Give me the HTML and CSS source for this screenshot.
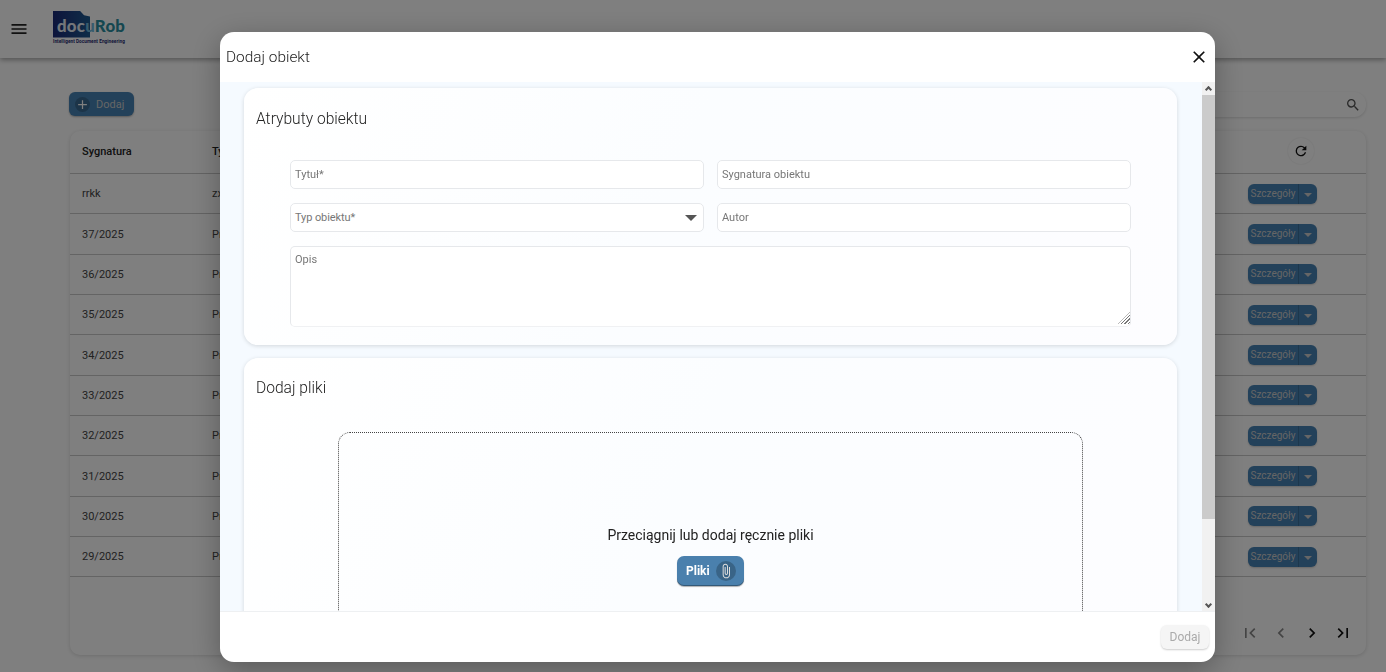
FILE: index.html
```html
<!DOCTYPE html>
<html lang="pl">
<head>
<meta charset="utf-8">
<title>docuRob</title>
<link rel="stylesheet" href="styles.css">
</head>
<body>
<div class="app">
  <header class="topbar">
    <svg class="menu-icon" viewBox="0 0 24 24"><path d="M3 18h18v-2H3v2zm0-5h18v-2H3v2zm0-7v2h18V6H3z"/></svg>
    <div class="logo">
      <div class="logo-mark">
        <span class="logo-shape"></span>
        <span class="logo-text"><span class="logo-docu">doc</span><span class="logo-u">u</span><span class="logo-rob">Rob</span></span>
      </div>
      <div class="logo-tag">Intelligent Document Engineering</div>
    </div>
  </header>
  <main class="main">
    <div class="toolbar">
      <button class="add-btn"><span class="add-icon"><svg viewBox="0 0 24 24"><path d="M19 13h-6v6h-2v-6H5v-2h6V5h2v6h6v2z"/></svg></span>Dodaj</button>
      <div class="search"><svg viewBox="0 0 24 24"><path d="M15.5 14h-.79l-.28-.27A6.47 6.47 0 0 0 16 9.500 6.500 6.500 0 1 0 9.500 16c1.610 0 3.090-.59 4.230-1.570l.27.28v.79l5 4.990L20.490 19l-4.990-5zm-6 0C7.010 14 5 11.990 5 9.500S7.010 5 9.500 5 14 7.010 14 9.500 11.990 14 9.500 14z"/></svg></div>
    </div>
    <section class="table-card">
      <div class="row head">
        <span class="c1">Sygnatura</span><span class="c2">Typ</span>
        <span class="refresh"><svg viewBox="0 0 24 24"><path d="M17.65 6.35A7.96 7.96 0 0 0 12 4a8 8 0 1 0 7.73 10h-2.08A6 6 0 1 1 12 6c1.66 0 3.14.69 4.22 1.78L13 11h7V4l-2.35 2.35z"/></svg></span>
      </div>
      <div class="row"><span class="c1">rrkk</span><span class="c2">zxc</span><span class="split"><b>Szczegóły</b><i></i></span></div>
      <div class="row"><span class="c1">37/2025</span><span class="c2">Projekt</span><span class="split"><b>Szczegóły</b><i></i></span></div>
      <div class="row"><span class="c1">36/2025</span><span class="c2">Projekt</span><span class="split"><b>Szczegóły</b><i></i></span></div>
      <div class="row"><span class="c1">35/2025</span><span class="c2">Projekt</span><span class="split"><b>Szczegóły</b><i></i></span></div>
      <div class="row"><span class="c1">34/2025</span><span class="c2">Projekt</span><span class="split"><b>Szczegóły</b><i></i></span></div>
      <div class="row"><span class="c1">33/2025</span><span class="c2">Projekt</span><span class="split"><b>Szczegóły</b><i></i></span></div>
      <div class="row"><span class="c1">32/2025</span><span class="c2">Projekt</span><span class="split"><b>Szczegóły</b><i></i></span></div>
      <div class="row"><span class="c1">31/2025</span><span class="c2">Projekt</span><span class="split"><b>Szczegóły</b><i></i></span></div>
      <div class="row"><span class="c1">30/2025</span><span class="c2">Projekt</span><span class="split"><b>Szczegóły</b><i></i></span></div>
      <div class="row"><span class="c1">29/2025</span><span class="c2">Projekt</span><span class="split"><b>Szczegóły</b><i></i></span></div>
      <div class="pager">
        <svg class="off" viewBox="0 0 24 24"><path d="M18.41 16.59 13.82 12l4.59-4.59L17 6l-6 6 6 6zM6 6h2v12H6z"/></svg>
        <svg class="off" viewBox="0 0 24 24"><path d="M15.41 7.41 14 6l-6 6 6 6 1.41-1.41L10.83 12z"/></svg>
        <svg viewBox="0 0 24 24"><path d="M10 6 8.59 7.41 13.17 12l-4.58 4.59L10 18l6-6z"/></svg>
        <svg viewBox="0 0 24 24"><path d="M5.59 7.41 10.18 12l-4.59 4.59L7 18l6-6-6-6zM16 6h2v12h-2z"/></svg>
      </div>
    </section>
  </main>
</div>

<div class="overlay">
  <div class="modal">
    <div class="modal-head">
      <h1>Dodaj obiekt</h1>
      <svg class="close" viewBox="0 0 24 24"><path d="M19 6.41 17.59 5 12 10.59 6.41 5 5 6.41 10.59 12 5 17.59 6.41 19 12 13.41 17.59 19 19 17.59 13.41 12z"/></svg>
    </div>
    <div class="modal-body">
      <div class="scroller">
        <section class="card attrs">
          <h2>Atrybuty obiektu</h2>
          <form class="form">
            <input class="field" placeholder="Tytuł*">
            <input class="field" placeholder="Sygnatura obiektu">
            <div class="field select"><span>Typ obiektu*</span><i class="caret"></i></div>
            <input class="field" placeholder="Autor">
            <div class="area-wrap"><textarea class="field area" placeholder="Opis"></textarea></div>
          </form>
        </section>
        <section class="card files">
          <h2>Dodaj pliki</h2>
          <div class="drop">
            <p>Przeciągnij lub dodaj ręcznie pliki</p>
            <button class="files-btn">Pliki<span class="clip"><svg viewBox="0 0 24 24"><path d="M16.5 6v11.500c0 2.210-1.790 4-4 4s-4-1.790-4-4V5a2.500 2.500 0 0 1 5 0v10.500c0 .55-.45 1-1 1s-1-.45-1-1V6H10v9.500a2.500 2.500 0 0 0 5 0V5c0-2.210-1.790-4-4-4S7 2.790 7 5v12.500c0 3.040 2.460 5.500 5.500 5.500s5.500-2.460 5.500-5.500V6h-1.500z"/></svg></span></button>
          </div>
        </section>
      </div>
      <div class="scrollbar">
        <span class="sb-btn"><i class="up"></i></span>
        <span class="sb-track"><span class="sb-thumb"></span></span>
        <span class="sb-btn"><i class="down"></i></span>
      </div>
    </div>
    <div class="modal-foot"><button class="submit" disabled>Dodaj</button></div>
  </div>
</div>
</body>
</html>
```
FILE: styles.css
```css
* { box-sizing: border-box; }
html, body { margin: 0; height: 100%; overflow: hidden; }
body { font-family: Roboto, "Liberation Sans", sans-serif; color: #222; background: #fff; }
.app { height: 672px; display: flex; flex-direction: column; }

.topbar { height: 58px; flex: none; background: #fff; box-shadow: 0 2px 5px rgba(0,0,0,.35); display: flex; align-items: center; padding-left: 9px; gap: 24px; position: relative; }
.menu-icon { width: 20px; height: 20px; fill: #222; }
.logo { display: flex; flex-direction: column; width: 74px; margin-top: -3px; }
.logo-mark { position: relative; height: 27px; }
.logo-shape { position: absolute; left: 0; top: 0; width: 37px; height: 27px; background: linear-gradient(90deg, #1b2a78, #1d5a90); clip-path: polygon(0 0, 72% 0, 84% 18%, 100% 22%, 100% 100%, 0 100%); }
.logo-text { position: relative; display: block; font: 900 16.8px/29px Lato, Roboto, sans-serif; padding-left: 4px; letter-spacing: .25px; white-space: nowrap; }
.logo-docu { color: #e8eef5; }
.logo-u { color: #6fb8dc; }
.logo-rob { color: #2a8ea0; }
.logo-tag { font: 700 4.7px/6px Roboto, sans-serif; color: #1d2a70; white-space: nowrap; margin-top: 1px; letter-spacing: .05px; }

.main { flex: 1; display: flex; flex-direction: column; padding: 34px 20px 17px 70px; background: #fff; min-height: 0; }
.toolbar { display: flex; justify-content: space-between; height: 25px; margin-bottom: 14px; margin-left: -1px; }
.add-btn { width: 65px; height: 24px; border: 0; border-radius: 6px; background: #4682b4; color: #ccc; font: 400 11px Roboto, sans-serif; display: flex; align-items: center; gap: 6px; padding: 0 0 0 6px; box-shadow: 0 1px 2px rgba(0,0,0,.3); }
.add-icon { width: 15px; height: 15px; border-radius: 50%; background: rgba(0,0,0,.2); display: flex; }
.add-icon svg { width: 15px; height: 15px; fill: #fff; }
.search { width: 400px; height: 25px; border-radius: 12px; background: #fff; box-shadow: 0 1px 3px rgba(0,0,0,.15); display: flex; align-items: center; justify-content: flex-end; padding-right: 5px; }
.search svg { width: 16px; height: 16px; fill: #555; }

.table-card { flex: 1; background: #fff; border-radius: 10px; box-shadow: 0 1px 4px rgba(0,0,0,.15); display: flex; flex-direction: column; min-height: 0; }
.row { height: 40.35px; flex: none; display: flex; align-items: center; font-size: 11px; color: #444; border-bottom: 1px solid #c8c8c8; padding-left: 12px; }
.head { height: 43px; font-weight: 500; color: #222; padding-bottom: 2px; }
.c1 { width: 130px; }
.c2 { flex: 1; }
.refresh { width: 26px; height: 26px; border-radius: 50%; margin-right: 52px; display: flex; align-items: center; justify-content: center; box-shadow: 0 0 2px rgba(0,0,0,.12); }
.refresh svg { width: 16px; height: 16px; fill: #111; }
.split { display: flex; width: 69px; height: 20px; margin-right: 49px; background: #4682b4; border-radius: 6px; color: #ccc; align-items: center; box-shadow: 0 1px 2px rgba(0,0,0,.2); }
.split b { flex: 1; font-weight: 400; font-size: 10px; text-align: center; border-right: 1px solid rgba(0,0,0,.15); line-height: 20px; }
.split i { width: 18px; position: relative; height: 20px; }
.split i::after { content: ""; position: absolute; left: 5px; top: 9px; border: 4px solid transparent; border-top: 4px solid #ccc; border-bottom: 0; }
.pager { flex: 1; display: flex; justify-content: flex-end; align-items: flex-end; gap: 11px; padding: 0 13px 12px 0; }
.pager svg { width: 20px; height: 20px; fill: #111; }
.pager svg.off { fill: #888; }

.overlay { position: fixed; inset: 0; background: rgba(0,0,0,.5); display: flex; align-items: flex-start; justify-content: flex-start; padding: 32px 0 0 220px; }
.modal { width: 995px; height: 630px; background: #fff; border-radius: 14px; display: flex; flex-direction: column; overflow: hidden; box-shadow: 0 8px 30px rgba(0,0,0,.3); }
.modal-head { height: 50px; flex: none; display: flex; align-items: center; justify-content: space-between; padding: 0 6px 0 6px; }
.modal-head h1 { font-size: 15.4px; font-weight: 300; color: #222; margin: 0; padding-bottom: 1px; }
.close { width: 20px; height: 20px; fill: #111; }
.modal-body { flex: 1; min-height: 0; display: flex; background: #f5faff; }
.scroller { flex: 1; min-width: 0; overflow: hidden; padding: 6px 25px 0 24px; display: flex; flex-direction: column; gap: 13px; }
.card { flex: none; background: linear-gradient(115deg, #fff 0%, #fbfdff 45%, #fdfdff 100%); border-radius: 14px; box-shadow: 0 1px 4px rgba(0,0,0,.14); padding: 0 12px; }
.card h2 { font-size: 15.6px; font-weight: 300; color: #222; margin: 0; line-height: 20px; }
.attrs { height: 257px; padding-top: 21px; }
.form { display: grid; grid-template-columns: 414px 414px; gap: 14px 13px; margin: 31px 0 0 34px; }
.field { height: 29px; border: 1px solid #e6e8eb; border-radius: 5px; background: #fff; font: 400 11px Roboto, sans-serif; color: #777; padding: 0 4px; outline: 0; display: flex; align-items: center; justify-content: space-between; }
.field::placeholder { color: #777; opacity: 1; }
.select { padding-right: 6px; }
.select span { letter-spacing: -.1px; }
.caret { border: 6px solid transparent; border-top: 6px solid #555; border-bottom: 0; }
.area-wrap { grid-column: 1 / 3; position: relative; height: 81px; }
.area-wrap::after { content: ""; position: absolute; right: 1px; bottom: 3px; width: 12px; height: 12px; clip-path: polygon(100% 0, 100% 100%, 0 100%); background: repeating-linear-gradient(135deg, #777 0 1px, transparent 1px 2.5px); }
.area { width: 100%; height: 81px; padding: 6px 4px; display: block; resize: none; border-bottom-color: #f0f1f3; }
.files { height: 340px; padding-top: 20px; }
.drop { margin: 34px 82px 0; height: 250px; border: 1px dotted #444; border-radius: 12px; display: flex; flex-direction: column; align-items: center; justify-content: center; gap: 11px; padding-bottom: 4px; }
.drop p { margin: 0; font-size: 14px; color: #222; line-height: 20px; }
.files-btn { width: 67px; height: 30px; border: 0; border-radius: 7px; background: #4a80ad; color: #fff; font: 700 12px Roboto, sans-serif; display: flex; align-items: center; gap: 6px; padding: 0 0 0 9px; box-shadow: inset 0 -1px 0 rgba(0,0,0,.3), 0 1px 1px rgba(0,0,0,.3); }
.clip { width: 20px; height: 20px; border-radius: 50%; background: rgba(0,0,0,.22); display: flex; align-items: center; justify-content: center; }
.clip svg { width: 16px; height: 16px; fill: #ddd; }
.scrollbar { width: 13px; flex: none; display: flex; flex-direction: column; background: #f1f1f1; }
.sb-btn { height: 13px; flex: none; display: flex; align-items: center; justify-content: center; }
.sb-btn i { width: 5px; height: 5px; border-left: 2px solid #555; border-top: 2px solid #555; }
.sb-btn .up { transform: rotate(45deg); margin-top: 1px; }
.sb-btn .down { transform: rotate(225deg); margin-top: -1px; }
.sb-track { flex: 1; display: block; }
.sb-thumb { display: block; height: 424px; background: #cbcbcb; }
.modal-foot { height: 51px; flex: none; border-top: 1px solid #eef0f2; display: flex; align-items: center; justify-content: flex-end; padding: 0 6px 0 0; }
.submit { width: 48px; height: 24px; border: 0; border-radius: 6px; background: #f5f5f5; color: #aaa; font: 400 12px Roboto, sans-serif; padding: 0; box-shadow: 0 1px 2px rgba(0,0,0,.2); }
```
